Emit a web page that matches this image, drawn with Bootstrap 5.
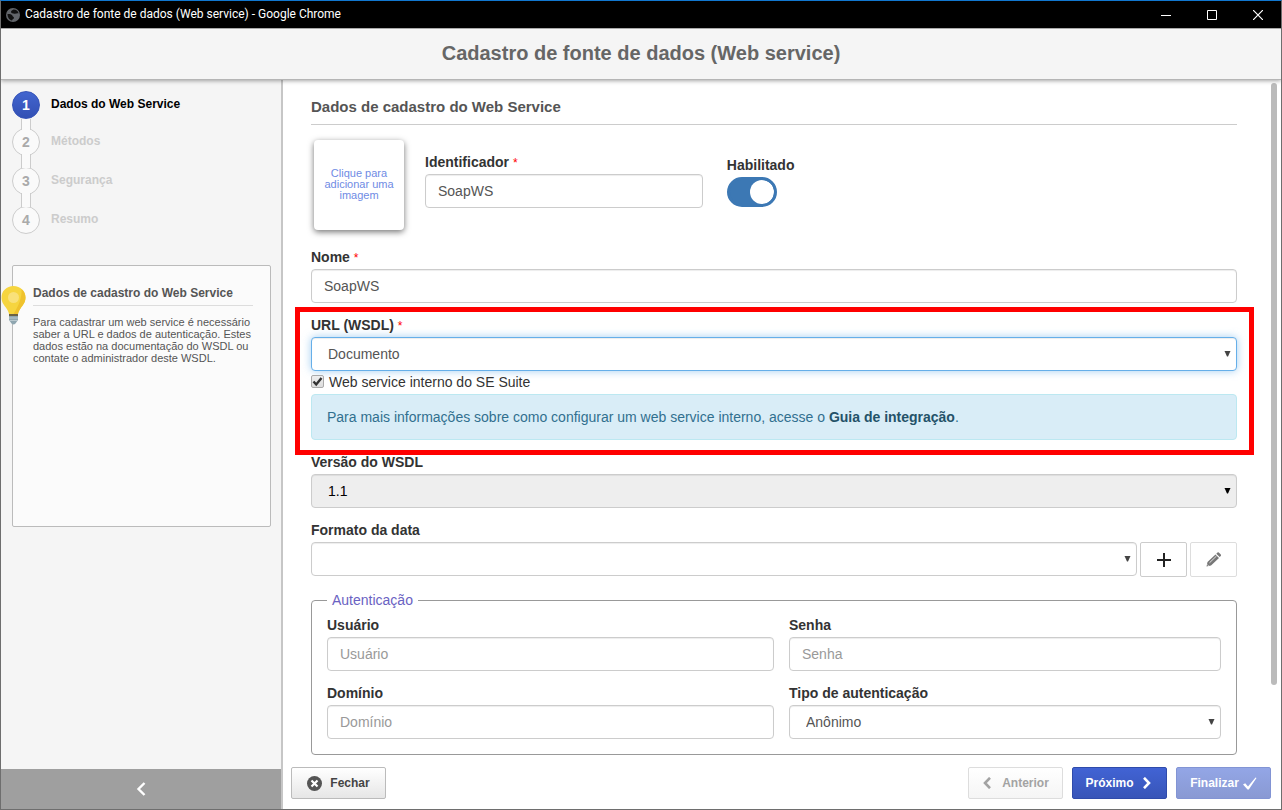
<!DOCTYPE html>
<html lang="pt-BR">
<head>
<meta charset="utf-8">
<meta name="viewport" content="width=device-width, initial-scale=1">
<title>Cadastro de fonte de dados (Web service)</title>
<link href="https://cdn.jsdelivr.net/npm/bootstrap@5.3.0/dist/css/bootstrap.min.css" rel="stylesheet">
<style>
  body { font: 14px/20px "Liberation Sans", Arial, sans-serif; color: #333; background: #fff; }
  .app-window { border: 1px solid #6e6e6e; border-top-color: #1177cf; }

  /* window title bar */
  .titlebar { height: 27px; padding-left: 5px; gap: 5px; background: #000; color: #fff; font: 12px/27px Roboto, "Open Sans", sans-serif; }
  .titlebar button { width: 46px; height: 27px; padding: 0; border: 0; background: none; color: #fff; }
  .page-head { position: relative; z-index: 2; height: 52px; background: #f5f5f5; border-top: 1px solid #a9a9a9; border-bottom: 1px solid #b5b5b5; box-shadow: 0 1px 4px rgba(0,0,0,.35); }
  .page-head h1 { font-size: 20px; line-height: 48px; font-weight: bold; color: #666; }

  /* wizard side panel */
  .side { width: 282px; background: #f5f5f5; border-right: 2px solid #c6c6c6; }
  .steps { padding: 11px 11px 0; gap: 11px; font-size: 12px; font-weight: bold; }
  .steps li { gap: 11px; color: #ccc; }
  .steps li:first-child { margin-bottom: -2px; color: #000; }
  .step-text { line-height: 26px; }
  .step-num { position: relative; width: 28px; height: 28px; border: 1px solid #ccc; border-radius: 50%; background: #fafafa; color: #aaa; font-size: 14px; line-height: 26px; text-align: center; }
  .step-num::after { content: ""; position: absolute; top: 25px; left: 8px; z-index: 1; width: 10px; height: 14px; background: #fafafa; border: solid #ccc; border-width: 0 1px; }
  .steps li:last-child .step-num::after { display: none; }
  .step-num.current { background: linear-gradient(#4265cf, #3250b4); border-color: #3553b8; color: #fff; }
  .step-num.current::after { top: 27px; height: 11px; }
  .tip { position: relative; margin: 31px 10px 0 11px; min-height: 262px; padding: 17px 17px 20px 20px; background: #fbfbfb; border: 1px solid #bbb; border-radius: 2px; color: #555; }
  .tip h2 { font-size: 12px; line-height: 20px; font-weight: bold; padding-bottom: 2px; border-bottom: 1px solid #ddd; margin-bottom: 10px; }
  .tip p { font-size: 11px; line-height: 12px; }
  .tip svg { position: absolute; left: -12px; top: 20px; }
  .collapse-btn { height: 40px; border: 0; background: #9f9f9f; }

  /* form */
  .pane { position: relative; padding: 17px 44px 0 28px; }
  .pane-title { font-size: 15px; line-height: 20px; font-weight: bold; color: #555; padding-bottom: 7px; border-bottom: 1px solid #ccc; margin-bottom: 15px; }
  .fld { margin-bottom: 12px; }
  .fld > label, .lbl { display: block; font-weight: bold; margin-bottom: 2px; }
  .req { color: #f00; font-weight: normal; font-size: 12px; line-height: 16px; }
  .form-control, .form-select { height: 34px; padding: 0 12px; font-size: 14px; line-height: 20px; color: #555; border-color: #ccc; border-radius: 4px; box-shadow: inset 0 1px 1px rgba(0,0,0,.075); }
  .form-control::placeholder { color: #999; }
  .form-select { padding: 0 24px 0 16px; background-position: right 5px top 12px; background-size: 7px 7px; background-image: url("data:image/svg+xml,%3Csvg xmlns='http://www.w3.org/2000/svg' viewBox='0 0 7 7'%3E%3Cpath fill='%23444' d='M.5 1h6L4 6.500H3z'/%3E%3C/svg%3E"); }
  .form-select:disabled { background-color: #eee; color: #000; opacity: 1; background-image: url("data:image/svg+xml,%3Csvg xmlns='http://www.w3.org/2000/svg' viewBox='0 0 7 7'%3E%3Cpath d='M.5 1h6L4 6.500H3z'/%3E%3C/svg%3E"); }
  .form-select.active-field { border-color: #66afe9; box-shadow: inset 0 1px 1px rgba(0,0,0,.075), 0 0 8px rgba(102,175,233,.6); }
  .photo { width: 90px; height: 90px; margin: 0 21px 17px 3px; padding: 0 8px 2px; border: 0; border-radius: 4px; background: #fff; box-shadow: 0 2px 6px rgba(0,0,0,.55); color: #6f8be4; font-size: 11px; line-height: 11px; }
  .ident { width: 30%; margin: 12px 24px 0 0; }
  .toggle { margin-top: 15px; }
  .toggle .form-check-input { display: block; float: none; width: 50px; height: 30px; margin: 0; border: 3px solid #3c78b4; background-color: #3c78b4; background-size: 24px 24px; box-shadow: none; background-position: right center; }
  .toggle .form-check-input:checked { background-image: url("data:image/svg+xml,%3Csvg xmlns='http://www.w3.org/2000/svg' viewBox='0 0 24 24'%3E%3Ccircle cx='12' cy='12' r='12' fill='white'/%3E%3C/svg%3E"); }
  .highlighted { position: relative; }
  .highlighted::after { content: ""; position: absolute; inset: -8px -17px -15px -16px; border: 5px solid #f00; pointer-events: none; }
  .check-row { height: 23px; padding-bottom: 2px; gap: 5px; }
  .check-row .form-check-input { width: 13px; height: 13px; margin: 0; border: 1px solid #aaa; border-radius: 2px; background: linear-gradient(#eee, #ddd); }
  .check-row .form-check-input:checked { border-color: #aaa; background: url("data:image/svg+xml,%3Csvg xmlns='http://www.w3.org/2000/svg' viewBox='0 0 11 11'%3E%3Cpath d='M1.500 5.500l2.700 3L9.500 2' fill='none' stroke='%23333' stroke-width='2.400'/%3E%3C/svg%3E") center/11px 11px no-repeat, linear-gradient(#eee, #ddd); }
  .alert { padding: 12px 15px; margin: 0; color: #31708f; background: #d9edf7; border-color: #bce8f1; border-radius: 4px; }
  .alert a { font-weight: bold; color: #245269; text-decoration: none; }
  .with-buttons { gap: 3px; }
  .sq { width: 47px; height: 35px; padding: 0; border: 1px solid #ccc; border-radius: 2px; background: #fff; color: #222; }
  .sq:disabled { border-color: #ddd; color: #777; }
  .auth { margin-top: 13px; border: 1px solid #999; border-radius: 4px; padding: 5px 15px 3px; }
  .auth legend { float: none; width: auto; margin: 0; padding: 0 5px; font-size: 14px; line-height: 20px; color: #6a62c2; }
  .auth-grid { display: grid; grid-template-columns: 447fr 432fr; column-gap: 15px; }
  .scroll-thumb { position: absolute; top: 3px; right: 4px; width: 6px; height: 89%; border-radius: 3px; background: #bbb; }

  /* footer buttons */
  .foot { padding: 11px 10px 10px 8px; gap: 9px; background: #fff; }
  .foot .btn { width: 95px; height: 32px; padding: 0; font-size: 12px; line-height: 20px; font-weight: bold; border-radius: 2px; opacity: 1; }
  .btn-plain { background: linear-gradient(#fff, #e6e6e6); border-color: #bbb; color: #444; }
  .btn-plain:disabled { background: linear-gradient(#fff, #f5f5f5); border-color: #ddd; color: #a3a3a3; }
  .btn-go { background: linear-gradient(#4163d4, #3855b8); border-color: #2f4bab; color: #fff; }
  .btn-go:disabled { background: linear-gradient(#93a6e6, #8999d3); border-color: #8294d4; color: #fff; }
</style>
</head>
<body>
<div class="app-window vh-100 d-flex flex-column overflow-hidden">
  <div class="titlebar d-flex align-items-center flex-shrink-0">
    <svg width="14" height="14" viewBox="0 0 14 14"><circle cx="7" cy="7" r="7" fill="#62656a"/><path d="M7.500 1.500c-1 .8-2.500 1-2.500 2.500s2 1.500 3.500 1.800c1.500.2 2.500-.8 4-.3C12.500 3.500 10.500 1.500 7.500 1.500zM1.500 6c2.500-.2 4.500.3 5 1.800.3 1.200 1.500 1 1.500 2.200 0 1-1.500 1-2 2.500C3.500 12 1.500 9.500 1.500 6z" fill="#111"/></svg>
    <span>Cadastro de fonte de dados (Web service) - Google Chrome</span>
    <div class="ms-auto d-flex">
      <button type="button" aria-label="Minimizar"><svg class="d-block mx-auto" width="10" height="10"><path d="M0 5.500h10" stroke="#fff"/></svg></button>
      <button type="button" aria-label="Maximizar"><svg class="d-block mx-auto" width="10" height="10"><path d="M.5.5h9v9h-9z" fill="none" stroke="#fff"/></svg></button>
      <button type="button" aria-label="Fechar janela"><svg class="d-block mx-auto" width="10" height="10"><path d="M0 0l10 10M10 0L0 10" stroke="#fff" stroke-width="1.200"/></svg></button>
    </div>
  </div>
  <header class="page-head flex-shrink-0 text-center"><h1 class="m-0">Cadastro de fonte de dados (Web service)</h1></header>

  <div class="d-flex flex-grow-1 overflow-hidden">
    <aside class="side d-flex flex-column flex-shrink-0">
      <ol class="steps list-unstyled d-flex flex-column m-0">
        <li class="d-flex"><span class="step-num current">1</span><span class="step-text">Dados do Web Service</span></li>
        <li class="d-flex"><span class="step-num">2</span><span class="step-text">Métodos</span></li>
        <li class="d-flex"><span class="step-num">3</span><span class="step-text">Segurança</span></li>
        <li class="d-flex"><span class="step-num">4</span><span class="step-text">Resumo</span></li>
      </ol>
      <section class="tip">
        <svg width="26" height="40" viewBox="0 0 26 40"><path d="M12.500 0C5.500 0 .5 5.200.5 11.500c0 5 3 8 5 11 1.500 2.200 2.200 4 2.500 5.500h9c.3-1.500 1-3.300 2.500-5.500 2-3 5-6 5-11C24.500 5.200 19.500 0 12.500 0z" fill="#f6d53f"/><path d="M20.500 3c.7 8-2.800 17-8 25H17c.3-1.500 1-3.300 2.500-5.500 2-3 5-6 5-11 0-3.500-1.500-6.500-4-8.500z" fill="#efc22d"/><circle cx="12.500" cy="11.500" r="5.500" fill="#f9e17a"/><path d="M8 28h9v6l-2.500 3.500q-2 2-4 0L8 34z" fill="#8fa6b0"/><path d="M8 28h9v2H8z" fill="#6b6244"/><path d="M8 32h9M8 34.500h9" stroke="#b9c8ce"/></svg>
        <h2>Dados de cadastro do Web Service</h2>
        <p class="m-0">Para cadastrar um web service é necessário saber a URL e dados de autenticação. Estes dados estão na documentação do WSDL ou contate o administrador deste WSDL.</p>
      </section>
      <button type="button" class="collapse-btn mt-auto" aria-label="Recolher painel"><svg class="d-block mx-auto" width="10" height="14" viewBox="0 0 10 14"><path d="M8.500 1L2.500 7l6 6" fill="none" stroke="#fff" stroke-width="2.400"/></svg></button>
    </aside>

    <main class="d-flex flex-column flex-grow-1">
      <form class="pane flex-grow-1 overflow-hidden" id="ws">
        <h2 class="pane-title">Dados de cadastro do Web Service</h2>
        <div class="d-flex align-items-start">
          <button type="button" class="photo flex-shrink-0">Clique para adicionar uma imagem</button>
          <div class="ident">
            <label class="lbl" for="ident">Identificador <span class="req">*</span></label>
            <input id="ident" class="form-control" value="SoapWS">
          </div>
          <div class="toggle form-switch p-0">
            <label class="lbl" for="hab">Habilitado</label>
            <input id="hab" type="checkbox" role="switch" class="form-check-input" checked>
          </div>
        </div>
        <div class="fld">
          <label for="nome">Nome <span class="req">*</span></label>
          <input id="nome" class="form-control" value="SoapWS">
        </div>
        <div class="fld highlighted">
          <label for="url">URL (WSDL) <span class="req">*</span></label>
          <select id="url" class="form-select active-field"><option>Documento</option></select>
          <div class="check-row d-flex align-items-center">
            <input id="interno" type="checkbox" class="form-check-input" checked>
            <label for="interno">Web service interno do SE Suite</label>
          </div>
          <div class="alert">Para mais informações sobre como configurar um web service interno, acesse o <a href="#">Guia de integração</a>.</div>
        </div>
        <div class="fld">
          <label for="versao">Versão do WSDL</label>
          <select id="versao" class="form-select" disabled><option>1.1</option></select>
        </div>
        <div class="fld">
          <label for="formato">Formato da data</label>
          <div class="with-buttons d-flex">
            <select id="formato" class="form-select"><option></option></select>
            <button type="button" class="sq flex-shrink-0" aria-label="Adicionar"><svg class="d-block mx-auto" width="14" height="14"><path d="M7 0v14M0 7h14" stroke="currentColor" stroke-width="2"/></svg></button>
            <button type="button" class="sq flex-shrink-0" aria-label="Editar" disabled><svg class="d-block mx-auto" width="15" height="15" viewBox="0 0 15 15" fill="currentColor"><path d="M.5 14.500l1-4.500L9.500 2.500 13 6 5 13.500zM10.300 1.800L11.500.6q.7-.6 1.300 0l2 2q.5.7 0 1.300L13.700 5z"/><path d="M3.500 10.800L10.500 4M1.300 12.500l1.300 1.300" stroke="#fff" stroke-width=".8"/></svg></button>
          </div>
        </div>
        <fieldset class="auth">
          <legend>Autenticação</legend>
          <div class="auth-grid">
            <div class="fld"><label for="usuario">Usuário</label><input id="usuario" class="form-control" placeholder="Usuário"></div>
            <div class="fld"><label for="senha">Senha</label><input id="senha" type="password" class="form-control" placeholder="Senha"></div>
            <div class="fld"><label for="dominio">Domínio</label><input id="dominio" class="form-control" placeholder="Domínio"></div>
            <div class="fld"><label for="tipo">Tipo de autenticação</label><select id="tipo" class="form-select"><option>Anônimo</option></select></div>
          </div>
        </fieldset>
        <div class="scroll-thumb"></div>
      </form>
      <footer class="foot d-flex flex-shrink-0">
        <button type="button" class="btn btn-plain me-auto d-flex align-items-center justify-content-center"><svg class="me-2" width="15" height="15" viewBox="0 0 15 15"><circle cx="7.500" cy="7.500" r="7.500" fill="#555"/><path d="M4.500 4.500l6 6M10.500 4.500l-6 6" stroke="#fff" stroke-width="2.200"/></svg>Fechar</button>
        <button type="button" class="btn btn-plain d-flex align-items-center justify-content-center" disabled><svg class="me-2" width="12" height="12" viewBox="0 0 12 12"><path d="M8 .8L3 6l5 5.200" fill="none" stroke="currentColor" stroke-width="2.600"/></svg>Anterior</button>
        <button type="button" class="btn btn-go d-flex align-items-center justify-content-center">Próximo<svg class="ms-2" width="12" height="12" viewBox="0 0 12 12"><path d="M2 .8L7 6l-5 5.200" fill="none" stroke="#fff" stroke-width="2.600"/></svg></button>
        <button type="button" class="btn btn-go d-flex align-items-center justify-content-center" disabled>Finalizar<svg class="ms-1" width="14" height="13" viewBox="0 0 14 13"><path d="M0 7.500l2.200-1.200 2.800 3.200L12.500.5l1 .6L5.800 12.500H4.500z" fill="#fff"/></svg></button>
      </footer>
    </main>
  </div>
</div>
<script src="https://cdn.jsdelivr.net/npm/bootstrap@5.3.0/dist/js/bootstrap.bundle.min.js"></script>
</body>
</html>
